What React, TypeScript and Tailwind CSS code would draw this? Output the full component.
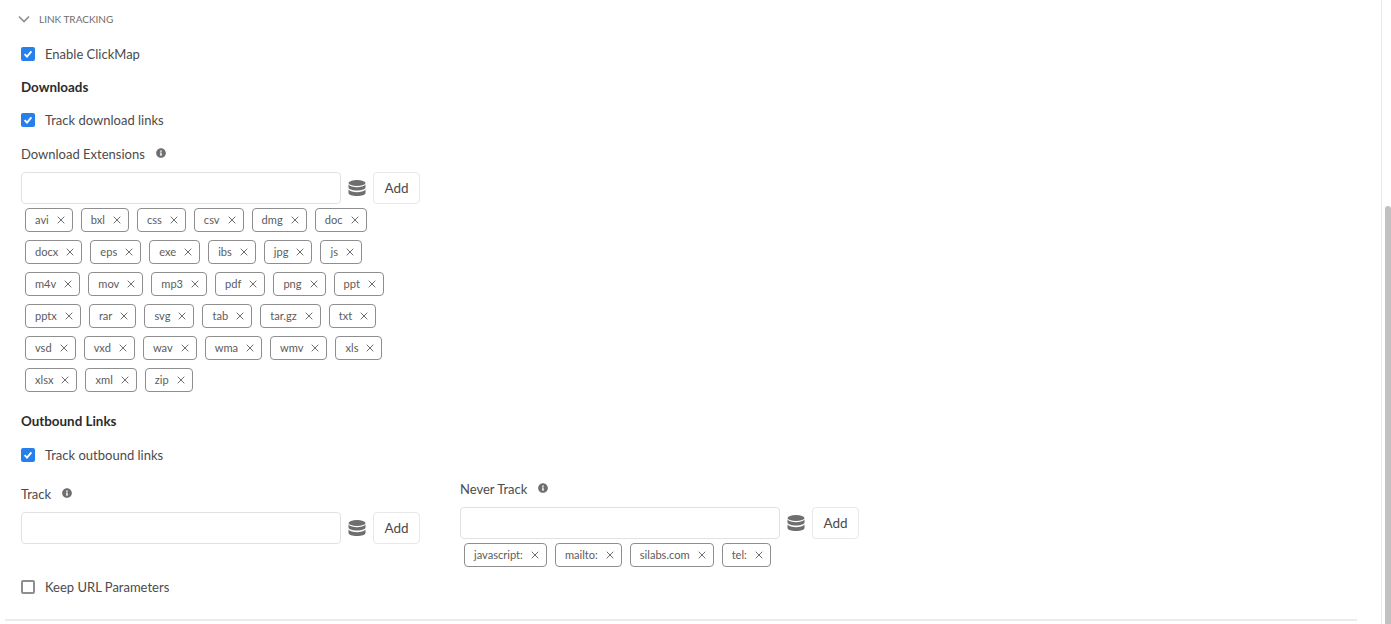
import React from 'react';
import { FaInfoCircle } from 'react-icons/fa';

const downloadRows = [
	['avi', 'bxl', 'css', 'csv', 'dmg', 'doc'],
	['docx', 'eps', 'exe', 'ibs', 'jpg', 'js'],
	['m4v', 'mov', 'mp3', 'pdf', 'png', 'ppt'],
	['pptx', 'rar', 'svg', 'tab', 'tar.gz', 'txt'],
	['vsd', 'vxd', 'wav', 'wma', 'wmv', 'xls'],
	['xlsx', 'xml', 'zip'],
];

const Checkbox: React.FC<{ label: string; checked?: boolean; className?: string }> = (props) => {
	return (
		<label className={`flex h-6 items-center gap-[10px] text-[13px] text-[#4b4b4b] ${props.className ?? ''}`}>
			{props.checked ? (
				<span className="flex h-[14px] w-[14px] items-center justify-center rounded-[2px] bg-[#2680eb]">
					<svg width="10" height="10" viewBox="0 0 10 10" fill="none">
						<path d="M1.6 5.2 4 7.6 8.4 2.4" stroke="white" strokeWidth="1.9" />
					</svg>
				</span>
			) : (
				<span className="h-[14px] w-[14px] rounded-[2px] border-2 border-[#8e8e8e] bg-white" />
			)}
			<span className="mt-[2px]">{props.label}</span>
		</label>
	);
};

const Heading: React.FC<{ title: string; className?: string }> = (props) => {
	return (
		<h3 className={`flex h-6 items-center text-[13.4px] font-bold text-[#2c2c2c] ${props.className ?? ''}`}>
			{props.title}
		</h3>
	);
};

const FieldLabel: React.FC<{ title: string; className?: string }> = (props) => {
	return (
		<div className={`flex h-6 items-center gap-[11px] text-[13px] text-[#4b4b4b] ${props.className ?? ''}`}>
			<span className="mt-[2px]">{props.title}</span>
			<FaInfoCircle className="mb-[2px] h-[10px] w-[10px] text-[#6e6e6e]" />
		</div>
	);
};

const DbIcon: React.FC = () => {
	return (
		<svg width="18" height="16" viewBox="0 0 18 16" fill="#6e6e6e" className="ml-[7px]">
			<ellipse cx="9" cy="3" rx="8.5" ry="3" />
			<path d="M.5 4.6C2 6.4 5.4 7.2 9 7.2s7-.8 8.5-2.6V7.4C17.5 9 13.7 10.4 9 10.4S.5 9 .5 7.4z" />
			<path d="M.5 9.6C2 11.4 5.4 12.2 9 12.2s7-.8 8.5-2.6V13C17.5 14.7 13.7 16 9 16S.5 14.7.5 13z" />
		</svg>
	);
};

const AddRow: React.FC<{ className?: string }> = (props) => {
	return (
		<div className={`flex h-8 items-center ${props.className ?? ''}`}>
			<input className="h-8 w-[320px] rounded-[4px] border border-[#e1e1e1] bg-white" />
			<DbIcon />
			<button className="ml-[7px] h-8 w-[47px] rounded-[4px] border border-[#e8e8e8] bg-white text-[13.5px] text-[#4b4b4b]">
				Add
			</button>
		</div>
	);
};

const Tag: React.FC<{ text: string }> = (props) => {
	return (
		<span className="flex h-6 items-center gap-[8px] rounded-[4px] border border-[#8e8e8e] pl-[9px] pr-[7px] text-[11.1px] text-[#5c5c5c]">
			{props.text}
			<svg width="8" height="8" viewBox="0 0 8 8" fill="none">
				<path d="M.7.7l6.6 6.6M7.3.7.7 7.3" stroke="#6e6e6e" strokeWidth="1" />
			</svg>
		</span>
	);
};

const App: React.FC = () => {
	return (
		<div className="flex h-[624px] overflow-hidden bg-white font-['Lato','Liberation_Sans',sans-serif]">
			<main className="w-[1381px] pl-[5px]">
				<div className="pl-4">
					<div className="flex h-[38px] items-center">
						<svg width="12" height="8" viewBox="0 0 12 8" fill="none" className="-ml-[3px]">
							<path d="M1 1.5 6 6.5 11 1.5" stroke="#8e8e8e" strokeWidth="1.6" />
						</svg>
						<span className="ml-[9px] text-[10px] text-[#6e6e6e]">LINK TRACKING</span>
					</div>
					<Checkbox label="Enable ClickMap" checked className="mt-1" />
					<Heading title="Downloads" className="mt-[9px]" />
					<Checkbox label="Track download links" checked className="mt-[9px]" />
					<FieldLabel title="Download Extensions" className="mt-[10px]" />
					<AddRow className="mt-[6px]" />
					<div className="mt-1 flex flex-col gap-2 pl-1">
						{downloadRows.map((row) => (
							<div key={row[0]} className="flex gap-2">
								{row.map((ext) => (
									<Tag key={ext} text={ext} />
								))}
							</div>
						))}
					</div>
					<Heading title="Outbound Links" className="mt-[17px]" />
					<Checkbox label="Track outbound links" checked className="mt-[10px]" />
					<div className="mt-[10px] flex gap-[40px]">
						<div className="w-[399px] pt-[5px]">
							<FieldLabel title="Track" />
							<AddRow className="mt-[6px]" />
						</div>
						<div>
							<FieldLabel title="Never Track" />
							<AddRow className="mt-[6px]" />
							<div className="mt-1 flex gap-2 pl-1">
								{['javascript:', 'mailto:', 'silabs.com', 'tel:'].map((item) => (
									<Tag key={item} text={item} />
								))}
							</div>
						</div>
					</div>
					<Checkbox label="Keep URL Parameters" className="mt-2" />
				</div>
				<div className="mt-5 h-[2px] w-[1352px] bg-[#ebebeb]" />
			</main>
			<aside className="w-[10px] border-l border-[#e8e8e8] bg-white pl-[3px] pt-[206px]">
				<div className="h-full rounded-t-[4px] bg-[#c1c1c1]" />
			</aside>
		</div>
	);
};

export default App;
